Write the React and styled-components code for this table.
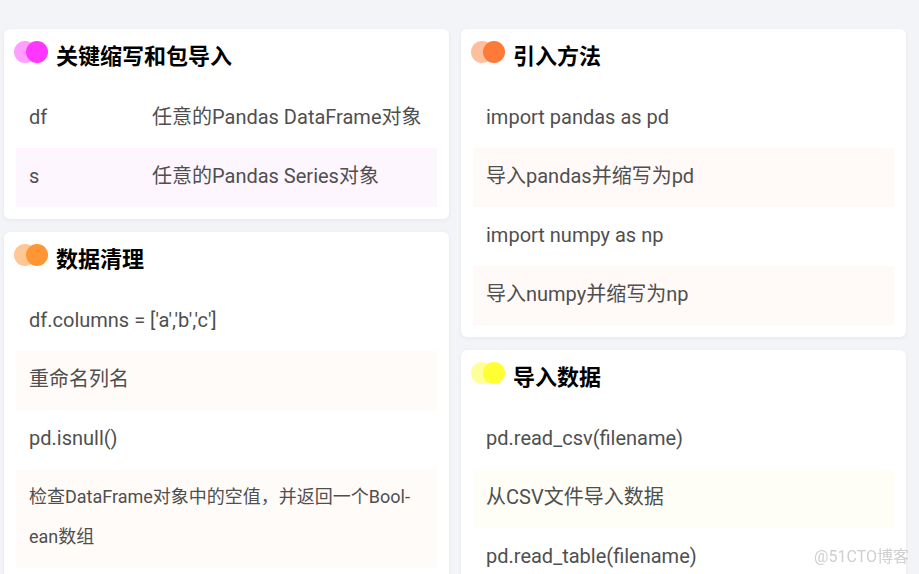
import React from 'react'
import styled, { createGlobalStyle } from 'styled-components'

const GlobalStyle = createGlobalStyle`
  html, body {
    margin: 0;
    padding: 0;
    background: #f3f4f8;
    font-family: Roboto, "Noto Sans CJK SC", sans-serif;
    overflow: hidden;
  }
`

const Page = styled.div`
  display: flex;
  gap: 12px;
  padding: 29px 13px 0 4px;
  height: 574px;
  box-sizing: border-box;
  overflow: hidden;
`

const Column = styled.div`
  width: 445px;
  display: flex;
  flex-direction: column;
  gap: 13px;
`

const Card = styled.section`
  background: #fff;
  border-radius: 6px;
  padding: 0 12px 12px;
  box-shadow: 0 1px 4px rgba(30, 40, 80, 0.06);
`

const Header = styled.div`
  display: flex;
  align-items: flex-start;
  height: 60px;
  padding-top: 9px;
  margin-left: -2px;
  box-sizing: border-box;
`

const Dots = styled.div`
  position: relative;
  width: 34px;
  height: 22px;
  margin-top: 3px;
  margin-right: 8px;
  flex-shrink: 0;
  &::before, &::after {
    content: '';
    position: absolute;
    top: 0;
    width: 22px;
    height: 22px;
    border-radius: 50%;
  }
  &::before {
    left: 0;
    background: ${p => p.$light};
  }
  &::after {
    left: 12px;
    background: ${p => p.$color};
  }
`

const Title = styled.h2`
  margin: 0;
  font-size: 22px;
  line-height: 32px;
  font-weight: 700;
  color: #000;
  font-family: "Noto Sans CJK SC", sans-serif;
`

const Row = styled.div`
  display: grid;
  grid-template-columns: ${p => (p.$split ? '123px 1fr' : '1fr')};
  padding: 7.5px 13px 11.5px;
  line-height: 40px;
  font-size: ${p => p.$small ? '18px' : '20px'};
  color: #4f4f4f;
  background: ${p => (p.$band ? p.$tint : 'transparent')};
  overflow-wrap: break-word;
`

const Watermark = styled.div`
  position: fixed;
  right: 10px;
  bottom: 7px;
  font-size: 16px;
  color: #cfcfcf;
  font-family: Roboto, "Noto Sans CJK SC", sans-serif;
`

const cards = {
  left: [
    {
      title: '关键缩写和包导入',
      color: '#ff36ff',
      light: '#ff9eff',
      tint: '#fdf6fe',
      split: true,
      rows: [
        ['df', '任意的Pandas DataFrame对象'],
        ['s', '任意的Pandas Series对象'],
      ],
    },
    {
      title: '数据清理',
      color: '#ff9633',
      light: '#ffc794',
      tint: '#fffbf8',
      rows: [
        ["df.columns = ['a','b','c']"],
        ['重命名列名'],
        ['pd.isnull()'],
        ['检查DataFrame对象中的空值，并返回一个Bool\u00ADean数组', true],
      ],
    },
  ],
  right: [
    {
      title: '引入方法',
      color: '#ff7a36',
      light: '#ffbe9c',
      tint: '#fffaf8',
      rows: [
        ['import pandas as pd'],
        ['导入pandas并缩写为pd'],
        ['import numpy as np'],
        ['导入numpy并缩写为np'],
      ],
    },
    {
      title: '导入数据',
      color: '#ffff33',
      light: '#ffff99',
      tint: '#fefef7',
      rows: [
        ['pd.read_csv(filename)'],
        ['从CSV文件导入数据'],
        ['pd.read_table(filename)'],
      ],
    },
  ],
}

const SheetCard = ({ card }) => (
  <Card>
    <Header>
      <Dots $color={card.color} $light={card.light} />
      <Title>{card.title}</Title>
    </Header>
    {card.rows.map((row, i) =>
      card.split ? (
        <Row key={i} $split $band={i % 2 === 1} $tint={card.tint}>
          <span>{row[0]}</span>
          <span>{row[1]}</span>
        </Row>
      ) : (
        <Row key={i} $band={i % 2 === 1} $tint={card.tint} $small={row[1]}>
          {row[0]}
        </Row>
      )
    )}
  </Card>
)

export default function App() {
  return (
    <>
      <GlobalStyle />
      <Page>
        <Column>
          {cards.left.map((c, i) => <SheetCard key={i} card={c} />)}
        </Column>
        <Column>
          {cards.right.map((c, i) => <SheetCard key={i} card={c} />)}
        </Column>
      </Page>
      <Watermark>@51CTO博客</Watermark>
    </>
  )
}
